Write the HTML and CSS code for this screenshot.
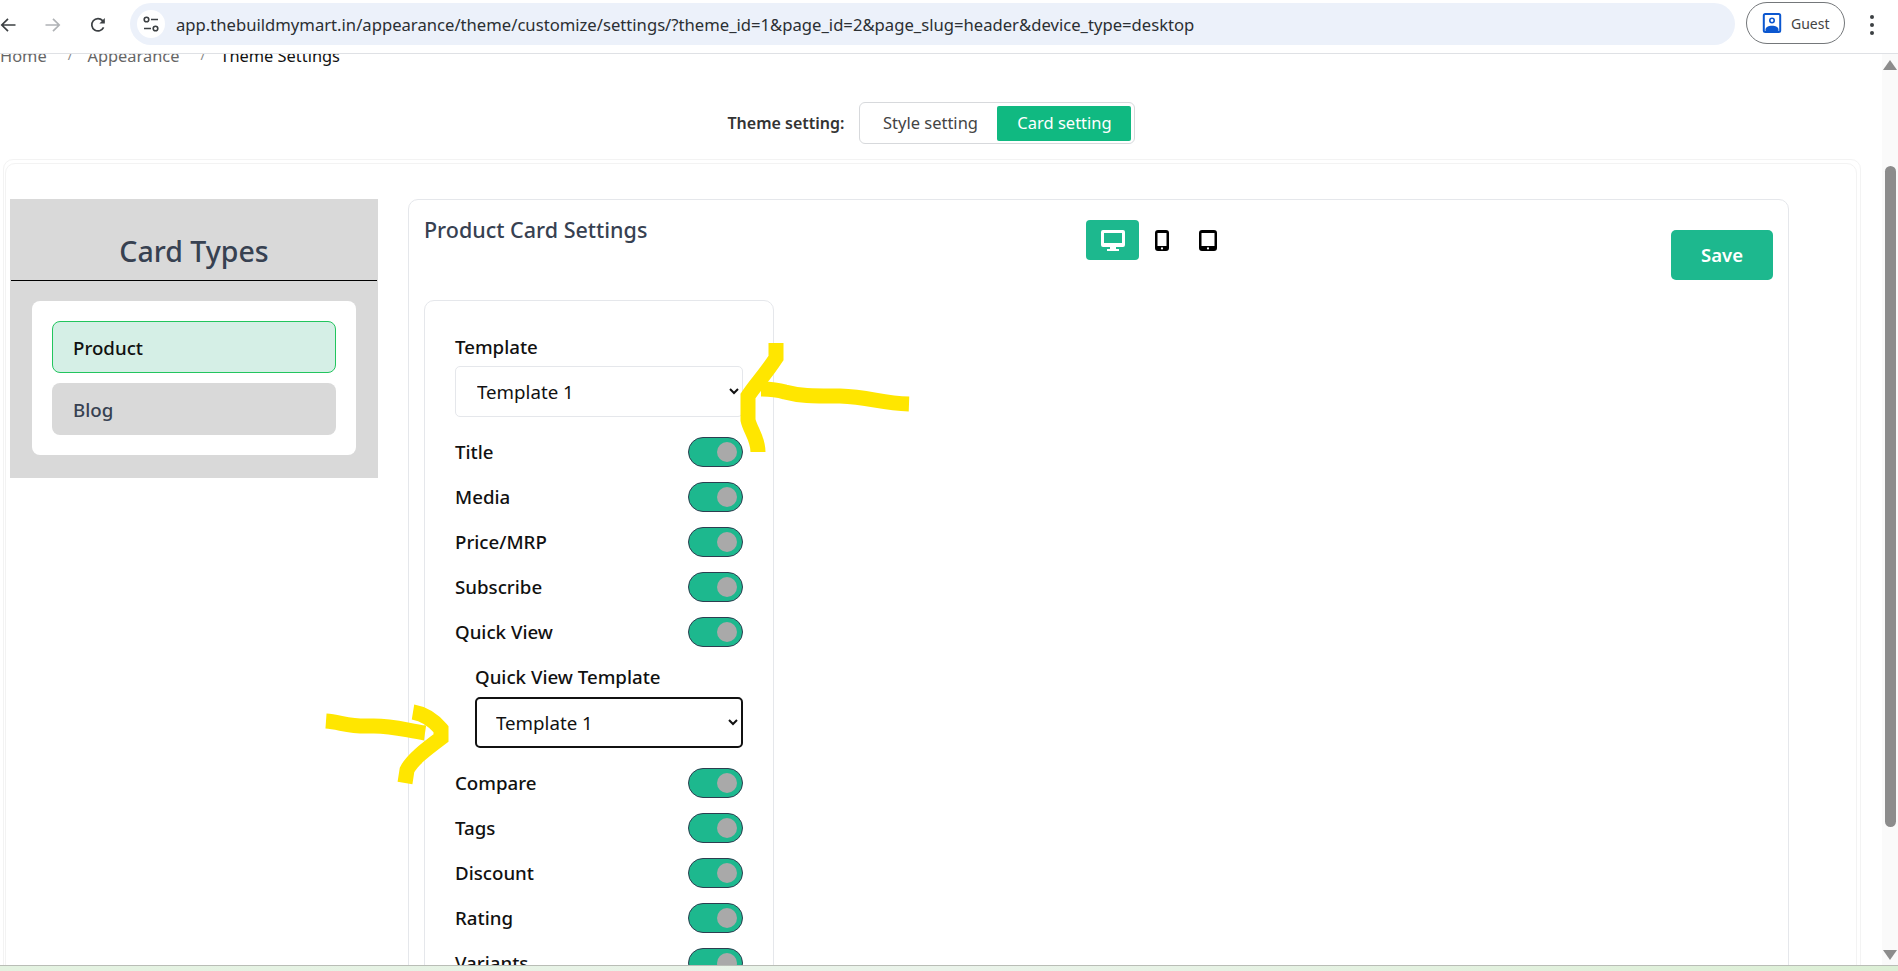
FILE: index.html
```html
<!DOCTYPE html>
<html lang="en">
<head>
    <meta charset="UTF-8">
    <title>Theme Settings</title>
    <link rel="stylesheet" href="styles.css">
</head>
<body>

    <div class="browser-bar">
        <svg class="nav-icon back" viewBox="0 0 16 16"><path d="M15.5 8H2M8 1.8 1.8 8 8 14.2" fill="none" stroke="#3c4043" stroke-width="1.7"/></svg>
        <svg class="nav-icon forward" viewBox="0 0 16 16"><path d="M.5 8H14M8 1.8 14.2 8 8 14.2" fill="none" stroke="#b0b3b6" stroke-width="1.7"/></svg>
        <svg class="nav-icon reload" viewBox="0 0 16 16"><path d="M13.6 10.4A6.2 6.2 0 1 1 12.6 3.6L14 5" fill="none" stroke="#3c4043" stroke-width="1.7"/><path d="M14.8 1v5.4H9.4z" fill="#3c4043"/></svg>
        <div class="url-pill">
            <span class="site-info">
                <svg viewBox="0 0 18 18" width="18" height="18"><g fill="none" stroke="#3c4043" stroke-width="1.6"><circle cx="4.5" cy="4.5" r="2.3"/><path d="M9 4.5h7M2 13.5h7"/><circle cx="13.5" cy="13.5" r="2.3"/></g></svg>
            </span>
            <span class="url-text">app.thebuildmymart.in/appearance/theme/customize/settings/?theme_id=1&amp;page_id=2&amp;page_slug=header&amp;device_type=desktop</span>
        </div>
        <div class="guest-pill">
            <svg viewBox="0 0 20 20" width="20" height="20"><rect x="1.8" y="1" width="16.4" height="18" rx="1.5" fill="none" stroke="#0b57d0" stroke-width="2"/><circle cx="10" cy="7.5" r="2.2" fill="none" stroke="#0b57d0" stroke-width="1.6"/><path d="M3.5 18v-1.5c0-2.5 3-3.8 6.5-3.8s6.5 1.3 6.5 3.8V18z" fill="#0b57d0"/></svg>
            <span>Guest</span>
        </div>
        <div class="kebab"><i></i><i></i><i></i></div>
    </div>

    <div class="viewport">
        <div class="page">
            <div class="breadcrumb">
                <span>Home</span><em>/</em><span>Appearance</span><em>/</em><span class="current">Theme Settings</span>
            </div>

            <div class="theme-switch">
                <span class="switch-label">Theme setting:</span>
                <div class="switch-box">
                    <button class="switch-btn">Style setting</button>
                    <button class="switch-btn active">Card setting</button>
                </div>
            </div>

            <div class="shell">
                <div class="shell-inner">
                    <aside class="card-types">
                        <h2>Card Types</h2>
                        <div class="type-list">
                            <div class="type-item selected">Product</div>
                            <div class="type-item">Blog</div>
                        </div>
                    </aside>

                    <section class="panel">
                        <div class="panel-head">
                            <h3>Product Card Settings</h3>
                            <div class="device-tabs">
                                <span class="device-tab active">
                                    <svg viewBox="0 0 24 21" width="24" height="21"><path d="M2 0h20a2 2 0 0 1 2 2v13a2 2 0 0 1-2 2H2a2 2 0 0 1-2-2V2a2 2 0 0 1 2-2zm1 3v10h18V3z" fill="#fff" fill-rule="evenodd"/><path d="M9 17h6v2h3v2H6v-2h3z" fill="#fff"/></svg>
                                </span>
                                <span class="device-tab phone">
                                    <svg viewBox="0 0 14 21" width="14" height="21"><path d="M3 0h8a3 3 0 0 1 3 3v15a3 3 0 0 1-3 3H3a3 3 0 0 1-3-3V3a3 3 0 0 1 3-3zm-.5 3v13h9V3z" fill="#000" fill-rule="evenodd"/><circle cx="7" cy="18.4" r="1.1" fill="#fff"/></svg>
                                </span>
                                <span class="device-tab tablet">
                                    <svg viewBox="0 0 18 21" width="18" height="21"><path d="M3 0h12a3 3 0 0 1 3 3v15a3 3 0 0 1-3 3H3a3 3 0 0 1-3-3V3a3 3 0 0 1 3-3zm-.5 3v13h13V3z" fill="#000" fill-rule="evenodd"/><circle cx="9" cy="18.4" r="1.1" fill="#fff"/></svg>
                                </span>
                            </div>
                            <button class="save-btn">Save</button>
                        </div>

                        <div class="settings-card">
                            <label class="field-label">Template</label>
                            <select class="template-select"><option>Template 1</option></select>

                            <div class="toggle-rows first">
                                <div class="toggle-row"><span>Title</span><span class="toggle"><i></i></span></div>
                                <div class="toggle-row"><span>Media</span><span class="toggle"><i></i></span></div>
                                <div class="toggle-row"><span>Price/MRP</span><span class="toggle"><i></i></span></div>
                                <div class="toggle-row"><span>Subscribe</span><span class="toggle"><i></i></span></div>
                                <div class="toggle-row"><span>Quick View</span><span class="toggle"><i></i></span></div>
                            </div>

                            <div class="quick-view">
                                <label class="field-label">Quick View Template</label>
                                <select class="template-select focused"><option>Template 1</option></select>
                            </div>

                            <div class="toggle-rows">
                                <div class="toggle-row"><span>Compare</span><span class="toggle"><i></i></span></div>
                                <div class="toggle-row"><span>Tags</span><span class="toggle"><i></i></span></div>
                                <div class="toggle-row"><span>Discount</span><span class="toggle"><i></i></span></div>
                                <div class="toggle-row"><span>Rating</span><span class="toggle"><i></i></span></div>
                                <div class="toggle-row"><span>Variants</span><span class="toggle"><i></i></span></div>
                            </div>
                        </div>
                    </section>
                </div>
            </div>
        </div>

        <div class="scrollbar">
            <span class="arrow up"></span>
            <span class="thumb"></span>
            <span class="arrow down"></span>
        </div>
    </div>

    <div class="bottom-strip"></div>

    <!-- yellow marker strokes drawn over the screenshot -->
    <svg class="marker" viewBox="0 0 1898 971" width="1898" height="971">
        <g fill="none" stroke="#ffe600" stroke-width="15">
            <path d="M909 404C880 403 870 397 840 396C810 396 800 396 785 392C775 389 770 389 761 389"/>
            <path d="M776 343V358C765 375 755 385 748 396V420C750 430 758 438 758 452"/>
            <path d="M326 721C340 722 350 727 370 726C390 725 405 730 425 733"/>
            <path d="M413 712C425 714 435 722 441 729V738C425 750 412 760 407 770L405 783"/>
        </g>
    </svg>

</body>
</html>
```

FILE: styles.css
```css
* {
    margin: 0;
    padding: 0;
    box-sizing: border-box;
}

body {
    font-family: "Noto Sans", sans-serif;
    width: 1898px;
    height: 971px;
    overflow: hidden;
    display: flex;
    flex-direction: column;
    position: relative;
    background: white;
    color: #111;
}

/* browser chrome */
.browser-bar {
    height: 54px;
    flex-shrink: 0;
    display: flex;
    align-items: flex-start;
    border-bottom: 1px solid #dfe1e5;
    background: white;
    position: relative;
    z-index: 2;
}

.nav-icon {
    width: 16px;
    height: 16px;
    margin-top: 17px;
}

.forward { margin-left: 29px; }
.reload { margin-left: 29px; }

.url-pill {
    width: 1605px;
    height: 42px;
    margin: 3px 0 0 24px;
    padding-left: 7px;
    background: #ecf1fa;
    border-radius: 21px;
    display: flex;
    align-items: center;
}

.site-info {
    width: 28px;
    height: 28px;
    background: white;
    border-radius: 50%;
    display: flex;
    align-items: center;
    justify-content: center;
}

.url-text {
    margin-left: 11px;
    font-size: 16.65px;
    color: #2b2f33;
    white-space: nowrap;
}

.guest-pill {
    width: 99px;
    height: 42px;
    margin: 2px 0 0 11px;
    padding-left: 15px;
    border: 1px solid #74777a;
    border-radius: 21px;
    display: flex;
    align-items: center;
    gap: 9px;
    font-size: 14px;
    color: #444;
}

.kebab {
    margin: 15px 0 0 25px;
    display: flex;
    flex-direction: column;
    gap: 4px;
}

.kebab i {
    width: 4px;
    height: 4px;
    border-radius: 50%;
    background: #3c4043;
}

/* page */
.viewport {
    flex: 1;
    min-height: 0;
    display: flex;
    overflow: hidden;
}

.page {
    flex: 1;
    min-width: 0;
}

.breadcrumb {
    height: 24px;
    margin-top: -11px;
    display: flex;
    align-items: center;
    font-size: 16.4px;
    color: #666;
}

.breadcrumb em {
    font-style: normal;
    font-size: 13px;
    margin: 0 15px 0 21px;
    color: #888;
}

.breadcrumb .current {
    color: #111;
}

.theme-switch {
    margin-top: 35px;
    padding-right: 19px;
    display: flex;
    justify-content: center;
    align-items: center;
    gap: 15px;
}

.switch-label {
    font-size: 16px;
    font-weight: 600;
    color: #333;
}

.switch-box {
    width: 276px;
    height: 42px;
    padding: 3px;
    border: 1px solid #d7d9dc;
    border-radius: 6px;
    display: flex;
    justify-content: flex-end;
    align-items: center;
    gap: 0;
}

.switch-btn {
    height: 35px;
    border: none;
    background: none;
    font-family: inherit;
    font-size: 16.5px;
    color: #444;
    width: 134px;
    padding-bottom: 2px;
}

.switch-btn.active {
    background: #10b981;
    color: white;
    border-radius: 2px;
}

.shell {
    width: 1858px;
    height: 900px;
    margin: 15px 0 0 3px;
    padding: 3px 3px 0 1px;
    border: 1px solid #f3f3f3;
    border-radius: 10px;
}

.shell-inner {
    height: 100%;
    padding: 35px 0 0 4px;
    border: 1px solid #f3f3f3;
    border-radius: 10px;
    display: flex;
    align-items: flex-start;
    gap: 30px;
}

.card-types {
    width: 368px;
    height: 279px;
    flex-shrink: 0;
    background: #d9d9d9;
}

.card-types h2 {
    height: 82px;
    padding-top: 33px;
    margin: 0 1px;
    border-bottom: 1px solid black;
    text-align: center;
    font-size: 28.5px;
    font-weight: 500;
    line-height: 38px;
    color: #374151;
}

.type-list {
    margin: 20px 22px 0;
    height: 154px;
    padding: 20px;
    background: white;
    border-radius: 8px;
    display: flex;
    flex-direction: column;
    gap: 10px;
}

.type-item {
    height: 52px;
    padding-left: 21px;
    border-radius: 8px;
    background: #d9d9d9;
    display: flex;
    align-items: center;
    font-size: 18.7px;
    font-weight: 500;
    color: #374151;
}

.type-item.selected {
    background: #d5efe6;
    border: 1px solid #22c55e;
    padding-left: 20px;
    color: #111;
}

.panel {
    width: 1381px;
    height: 800px;
    flex-shrink: 0;
    padding-left: 15px;
    border: 1px solid #e5e7eb;
    border-radius: 10px;
}

.panel-head {
    height: 100px;
    display: flex;
    align-items: flex-start;
}

.panel-head h3 {
    width: 662px;
    margin-top: 15px;
    font-size: 21.5px;
    font-weight: 500;
    line-height: 30px;
    color: #374151;
}

.device-tabs {
    display: flex;
    margin-top: 20px;
}

.device-tab {
    width: 46px;
    height: 40px;
    display: flex;
    align-items: center;
    justify-content: center;
}

.device-tab.active {
    width: 53px;
    background: #1db88e;
    border-radius: 4px;
}

.save-btn {
    width: 102px;
    height: 50px;
    margin: 30px 15px 0 auto;
    border: none;
    border-radius: 5px;
    background: #1db88e;
    color: white;
    font-family: inherit;
    font-size: 18.5px;
    font-weight: 600;
    padding-bottom: 2px;
}

.settings-card {
    width: 350px;
    height: 700px;
    padding: 34px 30px 0 30px;
    border: 1px solid #e5e7eb;
    border-radius: 10px;
}

.field-label {
    display: block;
    height: 24px;
    margin-bottom: 7px;
    font-size: 18.7px;
    font-weight: 500;
    line-height: 24px;
    color: #111;
}

.template-select {
    display: block;
    width: 100%;
    height: 51px;
    padding-left: 17px;
    border: 1px solid #e5e7eb;
    border-radius: 5px;
    background: white;
    font-family: inherit;
    font-size: 18.7px;
    color: #111;
}

.template-select.focused {
    border: 2.5px solid #111;
    padding-left: 15px;
}

.toggle-rows {
    margin-top: 20px;
    display: flex;
    flex-direction: column;
    gap: 15px;
}

.toggle-row {
    height: 30px;
    display: flex;
    justify-content: space-between;
    align-items: center;
    font-size: 18.7px;
    font-weight: 500;
}

.toggle-row > span:first-child {
    margin-top: -2px;
}

.toggle {
    width: 55px;
    height: 30px;
    padding: 0 5px;
    background: #1db88e;
    border: 1.5px solid #2d3e50;
    border-radius: 15px;
    display: flex;
    justify-content: flex-end;
    align-items: center;
}

.toggle i {
    width: 20px;
    height: 20px;
    border-radius: 50%;
    background: #a9a9a9;
}

.quick-view {
    margin: 18px 0 0 20px;
}

.quick-view .field-label {
    margin-bottom: 8px;
}

/* scrollbar */
.scrollbar {
    width: 16px;
    flex-shrink: 0;
    background: #fafafa;
    display: flex;
    flex-direction: column;
    align-items: center;
    position: relative;
}

.thumb {
    width: 11px;
    height: 661px;
    margin-top: 96px;
    background: #8c8c8c;
    border-radius: 6px;
}

.arrow {
    width: 0;
    height: 0;
    border-left: 7px solid transparent;
    border-right: 7px solid transparent;
}

.arrow.up {
    margin-top: 6px;
    border-bottom: 10px solid #8c8c8c;
}

.arrow.down {
    margin-top: auto;
    margin-bottom: 5px;
    border-top: 10px solid #8c8c8c;
}

.bottom-strip {
    height: 6px;
    flex-shrink: 0;
    border-top: 1px solid #b9bdb6;
    background: linear-gradient(90deg, #e3f2e0, #eaf3ea 50%, #dcefd5);
}

.marker {
    position: absolute;
    top: 0;
    left: 0;
    z-index: 3;
    pointer-events: none;
}
```
